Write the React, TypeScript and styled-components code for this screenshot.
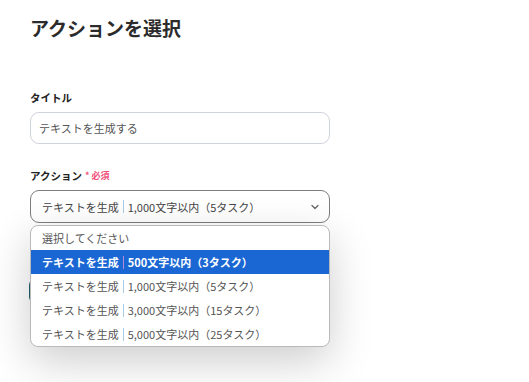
import React from "react";
import styled, { createGlobalStyle } from "styled-components";

const GlobalStyle = createGlobalStyle`
  html, body {
    margin: 0;
    padding: 0;
    background: #ffffff;
  }
  body {
    font-family: "Noto Sans CJK JP", "Noto Sans", sans-serif;
    color: #333333;
  }
`;

const Page = styled.div`
  width: 529px;
  height: 382px;
  overflow: hidden;
  padding: 13px 0 0 30px;
  box-sizing: border-box;
`;

const Heading = styled.h1`
  margin: 0;
  font-size: 19px;
  line-height: 30px;
  font-weight: 700;
  color: #2b2b2b;
`;

const Field = styled.div<{ $top: number }>`
  margin-top: ${({ $top }) => $top}px;
  width: 300px;
  display: flex;
  flex-direction: column;
  gap: 6px;
`;

const Label = styled.div`
  display: flex;
  align-items: center;
  gap: 3px;
  font-size: 10.5px;
  line-height: 16px;
  font-weight: 700;
  color: #222;
`;

const Required = styled.span`
  font-size: 9px;
  font-weight: 700;
  color: #f0507a;
`;

const Input = styled.div`
  height: 32px;
  box-sizing: border-box;
  border: 1px solid #cfd3dc;
  border-radius: 9px;
  padding: 0 8px;
  display: flex;
  align-items: center;
  font-size: 11px;
  color: #555;
`;

const SelectWrap = styled.div`
  position: relative;
`;

const Select = styled.div`
  height: 33px;
  box-sizing: border-box;
  border: 1px solid #7d7d7d;
  border-radius: 9px;
  padding: 0 8px 0 11px;
  display: flex;
  align-items: center;
  justify-content: space-between;
  font-size: 11px;
  color: #444;
`;

const Option = styled.span`
  display: flex;
  align-items: center;
`;

const Sep = styled.span<{ $active?: boolean }>`
  display: inline-block;
  width: 1px;
  height: 13px;
  margin: 0 4px;
  background: ${({ $active }) => ($active ? "#b08ad8" : "#a9cde6")};
`;

const Menu = styled.div`
  position: absolute;
  top: calc(100% + 2px);
  left: 0;
  width: 300px;
  box-sizing: border-box;
  background: #fff;
  border: 1px solid #b9b9b9;
  border-radius: 8px;
  overflow: hidden;
  box-shadow: 0 14px 44px rgba(0, 0, 0, 0.2);
  z-index: 2;
`;

const Item = styled.div<{ $active?: boolean }>`
  height: 24px;
  display: flex;
  align-items: center;
  padding: 0 11px;
  font-size: 11px;
  color: ${({ $active }) => ($active ? "#fff" : "#555")};
  font-weight: ${({ $active }) => ($active ? 700 : 400)};
  background: ${({ $active }) => ($active ? "#1a67d4" : "transparent")};
`;

const NextButton = styled.div`
  margin-top: 50px;
  margin-left: -1px;
  width: 120px;
  height: 24px;
  border-radius: 6px;
  background: #23606e;
`;

const Chevron = () => (
  <svg width="12" height="12" viewBox="0 0 24 24" fill="none" stroke="#666" strokeWidth="2.5" strokeLinecap="round" strokeLinejoin="round">
    <path d="M6 9l6 6 6-6" />
  </svg>
);

const options = [
  { size: "500", task: "3" },
  { size: "1,000", task: "5" },
  { size: "3,000", task: "15" },
  { size: "5,000", task: "25" },
];

export default function App() {
  return (
    <>
      <GlobalStyle />
      <Page>
        <Heading>アクションを選択</Heading>
        <Field $top={47}>
          <Label>タイトル</Label>
          <Input>テキストを生成する</Input>
        </Field>
        <Field $top={24}>
          <Label>
            アクション<Required>* 必須</Required>
          </Label>
          <SelectWrap>
            <Select>
              <Option>
                テキストを生成<Sep />1,000文字以内（5タスク）
              </Option>
              <Chevron />
            </Select>
            <Menu>
              <Item>選択してください</Item>
              {options.map((o, i) => (
                <Item key={o.size} $active={i === 0}>
                  テキストを生成<Sep $active={i === 0} />
                  {o.size}文字以内（{o.task}タスク）
                </Item>
              ))}
            </Menu>
          </SelectWrap>
          <NextButton />
        </Field>
      </Page>
    </>
  );
}
